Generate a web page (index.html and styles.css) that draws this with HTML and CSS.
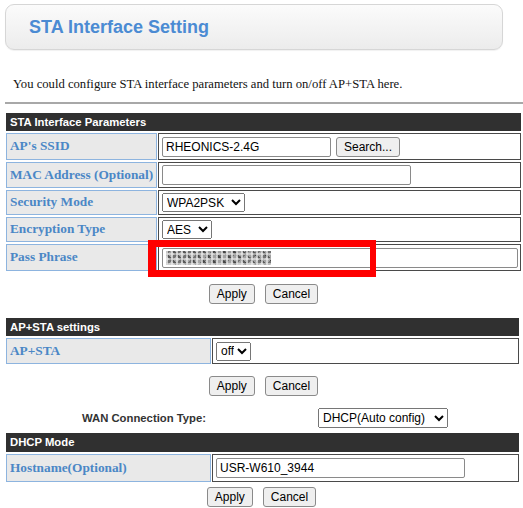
FILE: index.html
```html
<!DOCTYPE html>
<html>
<head>
<meta charset="utf-8">
<title>STA Interface Setting</title>
<link rel="stylesheet" href="styles.css">
</head>
<body>
<div class="page">
  <div class="titlebox"><h1 class="title">STA Interface Setting</h1></div>
  <p class="desc">You could configure STA interface parameters and turn on/off AP+STA here.</p>
  <div class="rule"></div>

  <section class="sec sec1">
    <div class="bar">STA Interface Parameters</div>
    <div class="grid g1">
      <div class="lab">AP's SSID</div>
      <div class="val"><input class="in in-ssid" value="RHEONICS-2.4G"><button class="btn btn-search">Search...</button></div>
      <div class="lab">MAC Address (Optional)</div>
      <div class="val"><input class="in in-mac" value=""></div>
      <div class="lab">Security Mode</div>
      <div class="val"><select class="sel sel-sec"><option>WPA2PSK</option></select></div>
      <div class="lab">Encryption Type</div>
      <div class="val"><select class="sel sel-enc"><option>AES</option></select></div>
      <div class="lab">Pass Phrase</div>
      <div class="val"><input class="in in-pass" value=""></div>
    </div>
  </section>
  <div class="btns btns1"><button class="btn">Apply</button><button class="btn">Cancel</button></div>

  <section class="sec sec2">
    <div class="bar">AP+STA settings</div>
    <div class="grid g2">
      <div class="lab">AP+STA</div>
      <div class="val"><select class="sel sel-off"><option>off</option></select></div>
    </div>
  </section>
  <div class="btns btns2"><button class="btn">Apply</button><button class="btn">Cancel</button></div>

  <div class="wan">
    <div class="wan-label">WAN Connection Type:</div>
    <select class="sel sel-wan"><option>DHCP(Auto config)</option></select>
  </div>

  <section class="sec sec3">
    <div class="bar">DHCP Mode</div>
    <div class="grid g3">
      <div class="lab">Hostname(Optional)</div>
      <div class="val"><input class="in in-host" value="USR-W610_3944"></div>
    </div>
  </section>
  <div class="btns btns3"><button class="btn">Apply</button><button class="btn">Cancel</button></div>

  <div class="mark"></div>
</div>
</body>
</html>
```

FILE: styles.css
```css
html, body {
  margin: 0;
  padding: 0;
  background: #ffffff;
}
.page {
  position: relative;
  width: 523px;
  height: 508px;
  overflow: hidden;
  font-family: "Liberation Serif", "Times New Roman", serif;
  color: #000;
}
.titlebox {
  box-sizing: border-box;
  margin: 4px 0 0 5px;
  width: 498px;
  height: 46px;
  border: 1px solid #d6d6d6;
  border-radius: 9px;
  background: linear-gradient(#fbfbfb, #ececec);
  box-shadow: 0 1px 1px rgba(0,0,0,0.06);
  display: flex;
  align-items: center;
  padding-left: 23px;
}
.title {
  margin: 0;
  font-family: "Liberation Sans", Arial, sans-serif;
  font-weight: bold;
  font-size: 18px;
  color: #4b8bd3;
}
.desc {
  margin: 26px 0 0 13px;
  font-size: 12.65px;
  line-height: 16px;
  color: #111;
}
.rule {
  margin: 10px 0 0 5px;
  height: 2px;
  background: #a8a8a8;
}
.sec {
  margin-left: 6px;
}
.sec1 { width: 515px; margin-top: 9px; }
.sec2 { width: 513px; margin-top: 14px; }
.sec3 { width: 513px; margin-top: 5px; }
.bar {
  height: 18px;
  line-height: 18px;
  background: #303030;
  color: #fff;
  font-family: "Liberation Sans", Arial, sans-serif;
  font-weight: bold;
  font-size: 11.3px;
  padding-left: 4px;
}
.sec3 .bar { height: 19px; line-height: 19px; }
.grid {
  display: grid;
  margin-top: 2px;
  column-gap: 1px;
  row-gap: 2px;
}
.g1 {
  grid-template-columns: 151px 1fr;
  grid-template-rows: 27px 26px 25px 25px 27px;
}
.g2 {
  grid-template-columns: 205px 1fr;
  grid-template-rows: 26px;
}
.g3 {
  grid-template-columns: 205px 1fr;
  grid-template-rows: 28px;
}
.lab {
  box-sizing: border-box;
  border: 1px solid #8db4df;
  background: #e9e9e9;
  padding-left: 3px;
  padding-bottom: 1px;
  display: flex;
  align-items: center;
  font-weight: bold;
  font-size: 13.3px;
  color: #4b87c6;
  white-space: nowrap;
}
.val {
  box-sizing: border-box;
  border: 1px solid #4a4a4a;
  background: #fff;
  padding-left: 3px;
  display: flex;
  align-items: center;
  gap: 5px;
}
.in {
  box-sizing: border-box;
  height: 20px;
  margin: 0;
  border: 1px solid #8a8a8a;
  border-radius: 2px;
  padding: 0 3px;
  font-family: "Liberation Sans", Arial, sans-serif;
  font-size: 12px;
  color: #000;
  background: #fff;
}
.in-ssid { width: 169px; }
.in-mac { width: 249px; }
.in-host { width: 249px; }
.in-pass {
  width: 356px;
  background:
    repeating-linear-gradient(90deg, rgba(235,235,235,0.7) 0 2px, transparent 2px 5px),
    repeating-linear-gradient(0deg, rgba(240,240,240,0.55) 0 2px, transparent 2px 5px),
    repeating-linear-gradient(45deg, rgba(40,40,40,0.6) 0 2px, transparent 2px 7px),
    repeating-linear-gradient(135deg, rgba(70,70,70,0.5) 0 3px, transparent 3px 8px),
    linear-gradient(#9d9d9d, #a8a8a8),
    #fff;
  background-size: 105px 14px, 105px 14px, 105px 14px, 105px 14px, 105px 14px;
  background-repeat: no-repeat;
  background-position: 3px 2px, 3px 2px, 3px 2px, 3px 2px, 3px 2px;
}
.sel {
  box-sizing: border-box;
  height: 19px;
  margin: 0;
  font-family: "Liberation Sans", Arial, sans-serif;
  font-size: 12px;
  color: #000;
}
.sel-sec { width: 83px; }
.sel-enc { width: 50px; }
.sel-off { width: 35px; }
.sel-wan { width: 130px; height: 20px; }
.btn {
  box-sizing: border-box;
  height: 20px;
  margin: 0;
  padding: 0 7px;
  border: 1px solid #8a8a8a;
  border-radius: 3px;
  background: #efefef;
  font-family: "Liberation Sans", Arial, sans-serif;
  font-size: 12px;
  color: #000;
}
.btns {
  display: flex;
  justify-content: center;
  gap: 10px;
  margin-left: 6px;
}
.btns1 { width: 515px; margin-top: 13px; }
.btns2 { width: 515px; margin-top: 12px; }
.btns3 { width: 511px; margin-top: 5px; }
.wan {
  display: flex;
  align-items: center;
  margin: 12px 0 0 6px;
}
.wan-label {
  width: 276px;
  text-align: center;
  font-family: "Liberation Sans", Arial, sans-serif;
  font-weight: bold;
  font-size: 11.3px;
  color: #333;
}
.sel-wan { margin-left: 36px; }
.mark {
  position: absolute;
  left: 148px;
  top: 240px;
  width: 228px;
  height: 37px;
  box-sizing: border-box;
  border-style: solid;
  border-color: #ff0000;
  border-width: 7px 6px 7px 8px;
}
```
